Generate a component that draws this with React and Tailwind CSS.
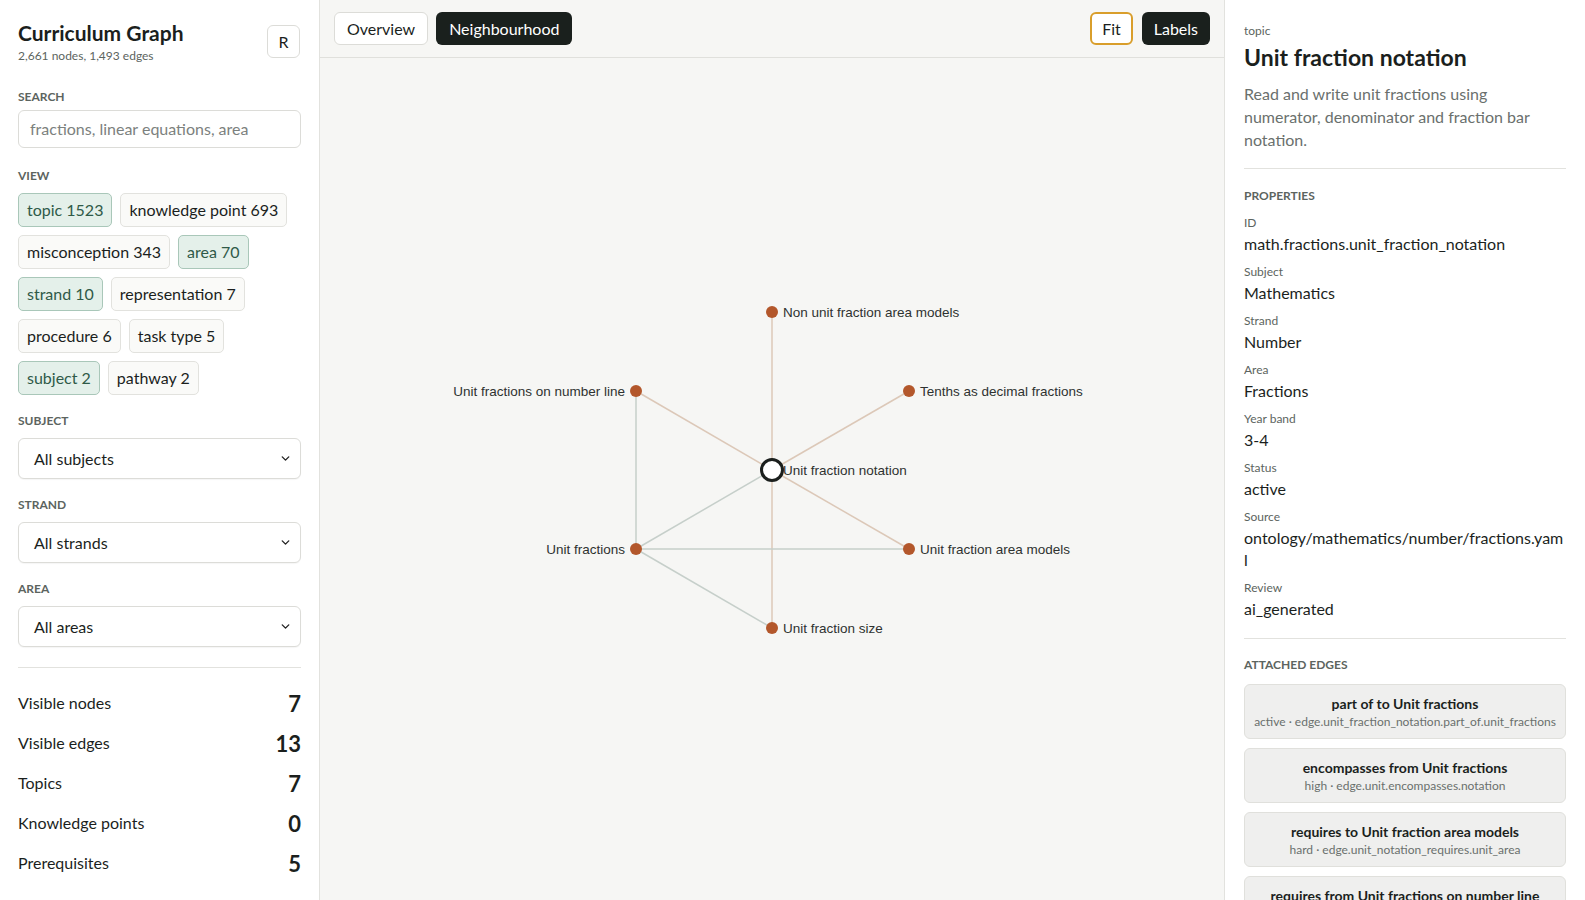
import { ChevronDown } from 'lucide-react'

const chips = [
  [['topic 1523', true], ['knowledge point 693', false]],
  [['misconception 343', false], ['area 70', true]],
  [['strand 10', true], ['representation 7', false]],
  [['procedure 6', false], ['task type 5', false]],
  [['subject 2', true], ['pathway 2', false]],
]

const stats = [
  ['Visible nodes', '7'],
  ['Visible edges', '13'],
  ['Topics', '7'],
  ['Knowledge points', '0'],
  ['Prerequisites', '5'],
]

const props = [
  ['ID', 'math.fractions.unit_fraction_notation'],
  ['Subject', 'Mathematics'],
  ['Strand', 'Number'],
  ['Area', 'Fractions'],
  ['Year band', '3-4'],
  ['Status', 'active'],
  ['Source', 'ontology/mathematics/number/fractions.yaml'],
  ['Review', 'ai_generated'],
]

const edges = [
  ['part of to Unit fractions', 'active · edge.unit_fraction_notation.part_of.unit_fractions'],
  ['encompasses from Unit fractions', 'high · edge.unit.encompasses.notation'],
  ['requires to Unit fraction area models', 'hard · edge.unit_notation_requires.unit_area'],
  ['requires from Unit fractions on number line', 'hard · edge.number_line.requires.notation'],
]

// graph coordinates, relative to the canvas
const C = { x: 452, y: 412 }
const nodes = [
  { id: 'nufam', x: 452, y: 254, label: 'Non unit fraction area models', side: 'r' },
  { id: 'ufonl', x: 316, y: 333, label: 'Unit fractions on number line', side: 'l' },
  { id: 'tenths', x: 589, y: 333, label: 'Tenths as decimal fractions', side: 'r' },
  { id: 'uf', x: 316, y: 491, label: 'Unit fractions', side: 'l' },
  { id: 'ufam', x: 589, y: 491, label: 'Unit fraction area models', side: 'r' },
  { id: 'size', x: 452, y: 570, label: 'Unit fraction size', side: 'r' },
]
const byId = Object.fromEntries(nodes.map((n) => [n.id, n]))
const lines = [
  [C, byId.nufam, '#dcc8b8'],
  [C, byId.ufonl, '#dcc8b8'],
  [C, byId.tenths, '#dcc8b8'],
  [C, byId.ufam, '#dcc8b8'],
  [C, byId.size, '#dcc8b8'],
  [C, byId.uf, '#c6cfca'],
  [byId.uf, byId.ufonl, '#c6cfca'],
  [byId.uf, byId.ufam, '#c6cfca'],
  [byId.uf, byId.size, '#c6cfca'],
]

function Label({ children }) {
  return <div className="text-xs font-bold uppercase text-[#5c6460] leading-4">{children}</div>
}

function Select({ value }) {
  return (
    <div className="mt-[9px] h-[41px] flex items-center justify-between rounded-md border border-[#dcdcd8] bg-white pl-[15px] pr-[8px] shadow-[0_1px_1px_rgba(0,0,0,0.04)]">
      <span className="text-base">{value}</span>
      <ChevronDown size={13} strokeWidth={2.5} className="text-[#222]" />
    </div>
  )
}

function Graph() {
  return (
    <svg className="block" width="905" height="842" viewBox="0 0 905 842">
      {lines.map(([a, b, c], i) => (
        <line key={i} x1={a.x} y1={a.y} x2={b.x} y2={b.y} stroke={c} strokeWidth="1.5" />
      ))}
      {nodes.map((n) => (
        <g key={n.id}>
          <circle cx={n.x} cy={n.y} r="6" fill="#b3572b" />
          <text
            x={n.side === 'r' ? n.x + 11 : n.x - 11}
            y={n.y + 4.5}
            textAnchor={n.side === 'r' ? 'start' : 'end'}
            fontSize="13.5"
            fill="#2e3230"
            fontFamily="'Liberation Sans', Arial, sans-serif"
          >
            {n.label}
          </text>
        </g>
      ))}
      <circle cx={C.x} cy={C.y} r="10.5" fill="#ffffff" stroke="#1b1f1d" strokeWidth="3" />
      <text x={C.x + 11} y={C.y + 4.5} fontSize="13.5" fill="#2e3230" fontFamily="'Liberation Sans', Arial, sans-serif">
        Unit fraction notation
      </text>
    </svg>
  )
}

export default function App() {
  return (
    <div className="flex h-[900px] w-[1585px] overflow-hidden bg-white text-[#1b1f1d] font-['Lato','Noto_Sans',sans-serif]">
      {/* sidebar */}
      <aside className="w-[320px] shrink-0 border-r border-[#e2e2de] bg-white px-[18px] pt-[20px]">
        <div className="flex items-start justify-between">
          <div>
            <h1 className="text-[21px] font-bold leading-[26px]">Curriculum Graph</h1>
            <p className="mt-[2px] text-xs text-[#5c6460]">2,661 nodes, 1,493 edges</p>
          </div>
          <button className="mt-[5px] mr-[1px] h-[33px] w-[33px] rounded-md border border-[#dcdcd8] bg-white text-base">R</button>
        </div>

        <div className="mt-[25px]">
          <Label>SEARCH</Label>
          <div className="mt-[5px] flex h-[38px] items-center rounded-md border border-[#dcdcd8] bg-white px-[11px] text-base text-[#7c817e]">
            fractions, linear equations, area
          </div>
        </div>

        <div className="mt-[20px]">
          <Label>VIEW</Label>
          <div className="mt-[9px] flex flex-col gap-[8px]">
            {chips.map((row, i) => (
              <div key={i} className="flex gap-[8px]">
                {row.map(([t, on]) => (
                  <span
                    key={t}
                    className={
                      on
                        ? 'h-[34px] flex items-center rounded-[5px] border border-[#a9c7b9] bg-[#e4f0ea] px-[8px] text-base text-[#2f5a48]'
                        : 'h-[34px] flex items-center rounded-[5px] border border-[#e2e2de] bg-[#fafaf8] px-[8px] text-base'
                    }
                  >
                    {t}
                  </span>
                ))}
              </div>
            ))}
          </div>
        </div>

        <div className="mt-[18px]">
          <Label>SUBJECT</Label>
          <Select value="All subjects" />
        </div>
        <div className="mt-[18px]">
          <Label>STRAND</Label>
          <Select value="All strands" />
        </div>
        <div className="mt-[18px]">
          <Label>AREA</Label>
          <Select value="All areas" />
        </div>

        <div className="mt-[20px] border-t border-[#e2e2de] pt-[15px] flex flex-col">
          {stats.map(([k, v]) => (
            <div key={k} className="flex h-[40px] items-center justify-between">
              <span className="text-base">{k}</span>
              <span className="text-[22px] font-bold">{v}</span>
            </div>
          ))}
        </div>
      </aside>

      {/* canvas */}
      <main className="flex w-[905px] shrink-0 flex-col border-r border-[#e2e2de] bg-[#f6f6f4]">
        <div className="flex h-[58px] shrink-0 items-center justify-between border-b border-[#e0e0dc] px-[14px]">
          <div className="flex gap-[8px]">
            <button className="h-[33px] rounded-md border border-[#dcdcd8] bg-white px-[12px] text-base">Overview</button>
            <button className="h-[33px] rounded-md bg-[#1a201d] px-[13px] text-base text-white">Neighbourhood</button>
          </div>
          <div className="flex gap-[9px]">
            <button className="h-[33px] rounded-md border-2 border-[#d99e2b] bg-white px-[10px] text-base">Fit</button>
            <button className="h-[33px] rounded-md bg-[#1a201d] px-[12px] text-base text-white">Labels</button>
          </div>
        </div>
        <div className="flex-1 overflow-hidden">
          <Graph />
        </div>
      </main>

      {/* details */}
      <section className="w-[360px] shrink-0 bg-white px-[19px] pt-[23px]">
        <div className="text-xs text-[#5c6460]">topic</div>
        <h2 className="mt-[4px] text-[23px] font-bold leading-[29px]">Unit fraction notation</h2>
        <p className="mt-[10px] text-base leading-[23px] text-[#6a706d]">
          Read and write unit fractions using numerator, denominator and fraction bar notation.
        </p>
        <div className="mt-[17px] border-t border-[#e2e2de] pt-[19px]">
          <Label>PROPERTIES</Label>
          <div className="mt-[11px] flex flex-col gap-[9px]">
            {props.map(([k, v]) => (
              <div key={k}>
                <div className="text-xs leading-4 text-[#5c6460]">{k}</div>
                <div className="mt-[2px] text-base leading-[22px] break-all">{v}</div>
              </div>
            ))}
          </div>
        </div>
        <div className="mt-[18px] border-t border-[#e2e2de] pt-[18px]">
          <Label>ATTACHED EDGES</Label>
          <div className="mt-[11px] flex flex-col gap-[9px]">
            {edges.map(([t, s]) => (
              <div key={t} className="flex h-[55px] flex-col items-center justify-center rounded-md border border-[#e0e0dc] bg-[#efefee] text-center">
                <div className="text-sm font-bold leading-5">{t}</div>
                <div className="text-xs leading-4 text-[#6a706d]">{s}</div>
              </div>
            ))}
          </div>
        </div>
      </section>
    </div>
  )
}
